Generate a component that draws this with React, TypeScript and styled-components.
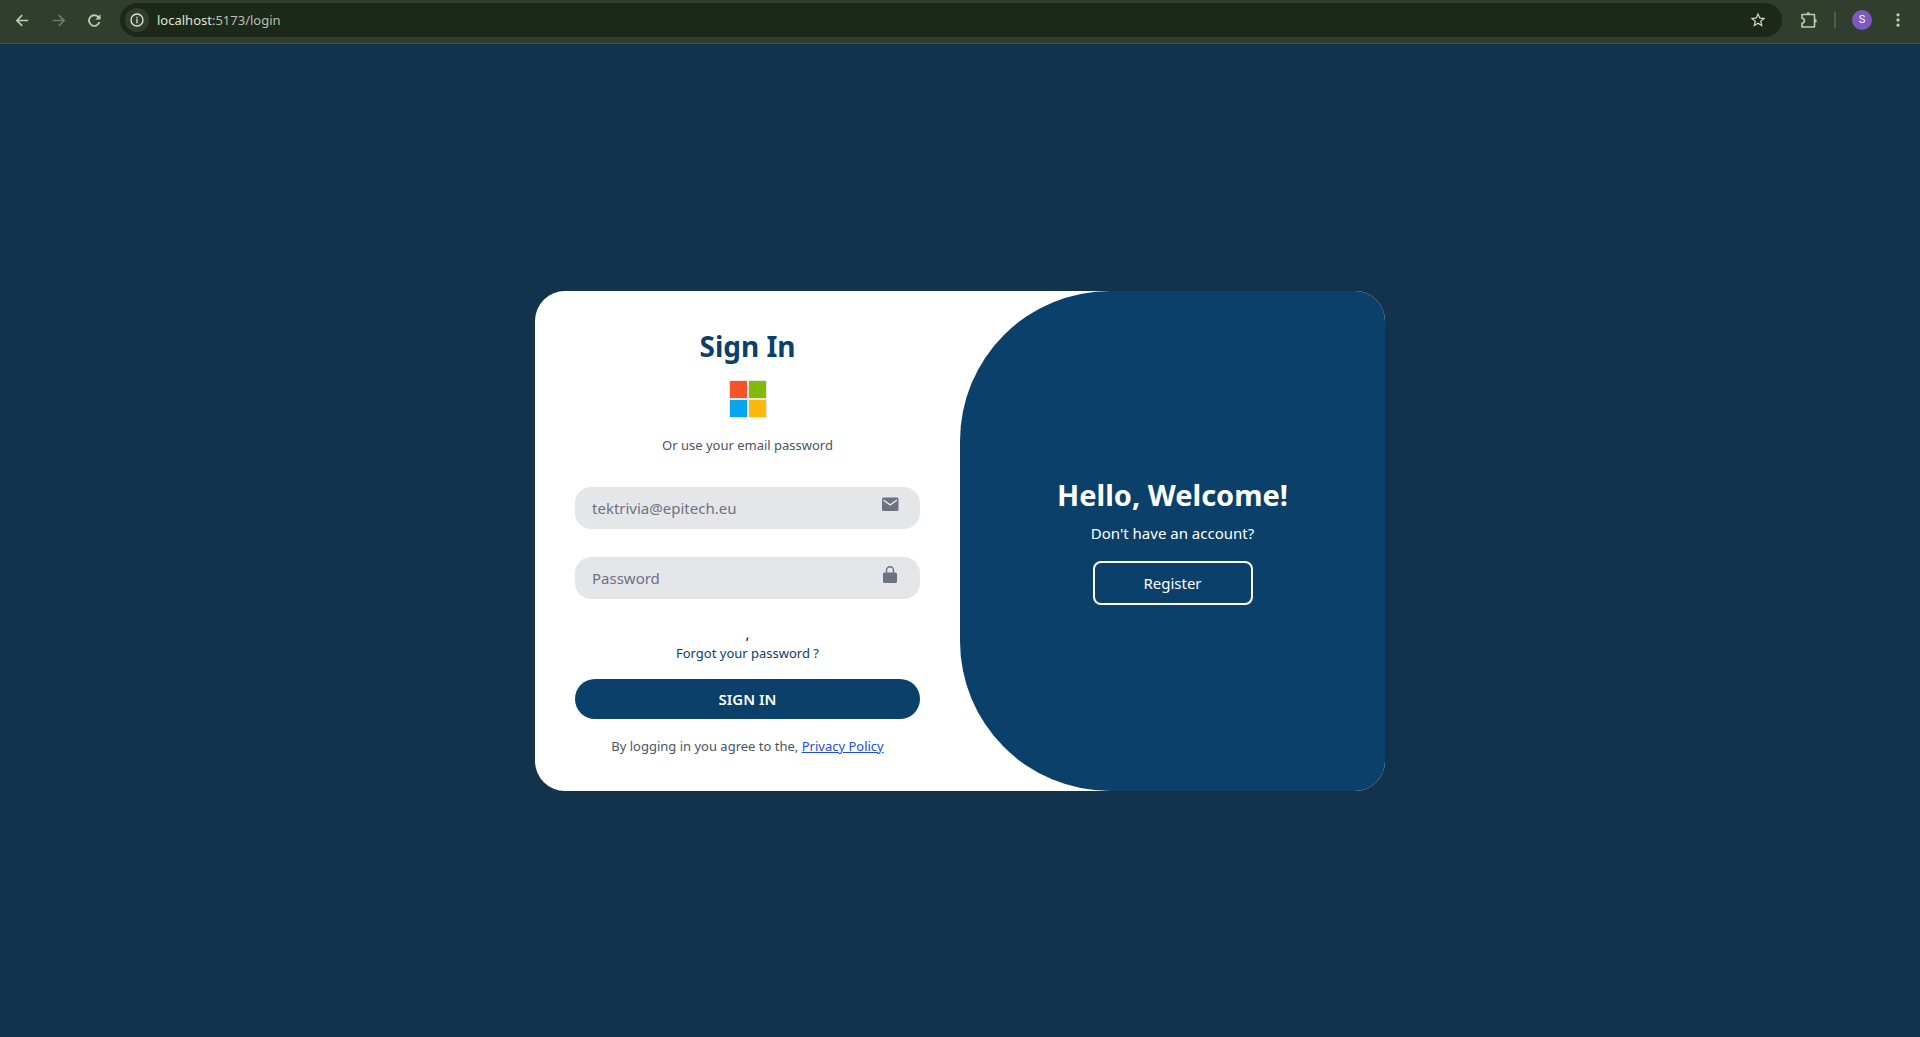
import React from "react";
import styled, { createGlobalStyle } from "styled-components";

const GlobalStyle = createGlobalStyle`
  *, *::before, *::after { box-sizing: border-box; }
  body { margin: 0; background: #13334c; }
  body, button, input { font-family: "Noto Sans", "Open Sans", sans-serif; }
`;

const Window = styled.div`
  min-height: 100vh;
  display: flex;
  flex-direction: column;
`;

const Toolbar = styled.header`
  height: 44px;
  padding: 0 9px 3px 9px;
  display: flex;
  align-items: center;
  background: #313e2d;
  border-bottom: 1px solid #46523f;
`;

const ToolButton = styled.button<{ $muted?: boolean }>`
  width: 26px;
  height: 26px;
  padding: 0;
  border: 0;
  background: none;
  display: grid;
  place-items: center;
  color: ${(p) => (p.$muted ? "#6f7c69" : "#b9ceb0")};
`;

const Navigation = styled.nav`
  display: flex;
  gap: 10px;
  margin-right: 13px;
`;

const AddressBar = styled.div`
  flex: 1;
  height: 34px;
  padding: 0 11px 0 5px;
  display: flex;
  align-items: center;
  gap: 8px;
  border-radius: 17px;
  background: #1c2919;
`;

const SiteInfo = styled.button`
  width: 24px;
  height: 24px;
  padding: 0;
  border: 0;
  border-radius: 50%;
  display: grid;
  place-items: center;
  background: #313e2d;
  color: #dfe4da;
`;

const BookmarkButton = styled(ToolButton)`
  color: #d3dacd;
`;

const Url = styled.div`
  flex: 1;
  font-size: 13px;
  line-height: 20px;
  color: #b9bfb4;
  span { color: #dfe4da; }
`;

const Extras = styled.div`
  display: flex;
  align-items: center;
  margin-left: 14px;
`;

const Divider = styled.span`
  width: 2px;
  height: 16px;
  margin: 0 16px 0 12px;
  background: #4d5d48;
`;

const Avatar = styled.button`
  width: 20px;
  height: 20px;
  padding: 0;
  border: 0;
  border-radius: 50%;
  margin-right: 13px;
  background: #7e57c2;
  color: #fff;
  font-family: Roboto, sans-serif;
  font-size: 11px;
  line-height: 20px;
`;

const Page = styled.main`
  flex: 1;
  display: grid;
  place-items: center;
`;

const Card = styled.section`
  width: 100%;
  max-width: 850px;
  min-height: 500px;
  display: grid;
  grid-template-columns: 1fr 1fr;
  overflow: hidden;
  border-radius: 30px;
  background: #fff;
`;

const Form = styled.form`
  padding: 37px 40px 30px;
  display: flex;
  flex-direction: column;
  align-items: center;
  text-align: center;
`;

const Title = styled.h1`
  margin: 0;
  font-size: 29px;
  line-height: 36px;
  font-weight: 700;
  color: inherit;
`;

const FormTitle = styled(Title)`
  font-size: 28px;
  color: #0a4069;
`;

const MicrosoftButton = styled.button`
  margin: 16px 0;
  padding: 0;
  border: 0;
  background: none;
  display: block;
  height: 38px;
`;

const Small = styled.p`
  margin: 0;
  font-size: 13px;
  line-height: 22px;
  color: #4b5563;
`;

const Fields = styled.div`
  width: 100%;
  margin: 31px 0 24px;
  display: grid;
  gap: 28px;
`;

const Field = styled.label`
  display: flex;
  height: 42px;
  padding: 0 20px 0 17px;
  border-radius: 16px;
  background: #e5e6ea;
  color: #6b7280;
  svg { margin-top: 7px; }
`;

const Input = styled.input`
  flex: 1;
  min-width: 0;
  padding: 0;
  border: 0;
  outline: 0;
  background: none;
  font-size: 15px;
  &::placeholder { color: #6b7280; opacity: 1; }
`;

const Comma = styled.span`
  font-size: 15px;
  line-height: 20px;
  color: #111827;
`;

const ForgotLink = styled.a`
  font-size: 13px;
  line-height: 20px;
  color: #0a4069;
  text-decoration: none;
`;

const SubmitButton = styled.button`
  width: 100%;
  height: 40px;
  margin: 16px 0;
  border: 0;
  border-radius: 20px;
  background: #0a4069;
  color: #fff;
  font-size: 15px;
  line-height: 24px;
  font-weight: 600;
`;

const PolicyLink = styled.a`
  color: #1d4ed8;
`;

const Welcome = styled.aside`
  display: flex;
  flex-direction: column;
  align-items: center;
  justify-content: center;
  border-radius: 150px 0 0 150px;
  background: #0a4069;
  color: #fff;
`;

const Question = styled.p`
  margin: 8px 0 16px;
  font-size: 15px;
  line-height: 24px;
`;

const RegisterButton = styled.button`
  width: 160px;
  height: 44px;
  border: 2px solid #fff;
  border-radius: 8px;
  background: none;
  color: #fff;
  font-size: 15px;
`;

const Icon = ({ d, size = 17 }: { d: string; size?: number }) => (
  <svg width={size} height={size} viewBox="0 0 24 24" fill="currentColor" aria-hidden="true">
    <path d={d} />
  </svg>
);

export default function App() {
  return (
    <Window>
      <GlobalStyle />
      <Toolbar>
        <Navigation>
          <ToolButton aria-label="Back">
            <Icon d="M20 10.800H6.800l5.600-5.600L10.800 3.600 2.400 12l8.400 8.400 1.600-1.600-5.600-5.600H20z" />
          </ToolButton>
          <ToolButton aria-label="Forward" $muted>
            <Icon d="M4 10.800h13.200l-5.600-5.600L13.200 3.600l8.400 8.400-8.400 8.400-1.600-1.600 5.600-5.600H4z" />
          </ToolButton>
          <ToolButton aria-label="Reload">
            <Icon d="M18.800 4.900A10 10 0 1 0 21.400 14.500H18.300A7 7 0 1 1 16.600 7.100L13.200 10.500H21.700V2z" size={15} />
          </ToolButton>
        </Navigation>
        <AddressBar>
          <SiteInfo aria-label="Site information">
            <Icon d="M11 10.500h2V17h-2zM11 7h2v2.200h-2zM12 2a10 10 0 1 0 0 20 10 10 0 0 0 0-20zm0 18a8 8 0 1 1 0-16 8 8 0 0 1 0 16z" size={16} />
          </SiteInfo>
          <Url><span>localhost</span>:5173/login</Url>
          <BookmarkButton aria-label="Bookmark">
            <Icon d="M22 9.240l-7.190-.62L12 2 9.190 8.630 2 9.240l5.460 4.730L5.820 21 12 17.270 18.180 21l-1.630-7.030zM12 15.400l-3.760 2.270 1-4.280-3.320-2.880 4.380-.38L12 6.100l1.710 4.040 4.380.38-3.320 2.880 1 4.280z" size={18} />
          </BookmarkButton>
        </AddressBar>
        <Extras>
          <ToolButton aria-label="Extensions">
            <svg width="18" height="18" viewBox="0 0 18 18" fill="none" stroke="currentColor" strokeWidth="1.6" strokeLinejoin="round" aria-hidden="true">
              <path d="M2 3.500H14.500V16H2v-3.700c3.200-.3 3.200-4.700 0-5z" />
              <path d="M6.300 3.500a1.900 2.300 0 0 1 3.800 0zM14.500 7.800a2.300 1.900 0 0 1 0 3.800z" fill="currentColor" stroke="none" />
            </svg>
          </ToolButton>
          <Divider />
          <Avatar aria-label="Profile">S</Avatar>
          <ToolButton aria-label="Menu">
            <Icon d="M12 3.800a2 2 0 1 0 0 4 2 2 0 0 0 0-4zm0 6.200a2 2 0 1 0 0 4 2 2 0 0 0 0-4zm0 6.200a2 2 0 1 0 0 4 2 2 0 0 0 0-4z" size={20} />
          </ToolButton>
        </Extras>
      </Toolbar>

      <Page>
        <Card>
          <Form onSubmit={(e) => e.preventDefault()}>
            <FormTitle>Sign In</FormTitle>
            <MicrosoftButton type="button" aria-label="Sign in with Microsoft">
              <svg width="39" height="38" viewBox="-1 0 39 38" aria-hidden="true">
                <path fill="#ebe7e2" d="M0 0h38v38H0z" />
                <path fill="#f65427" d="M1 1h17v17H1z" />
                <path fill="#80bb0a" d="M20 1h17v17H20z" />
                <path fill="#06a5f0" d="M1 20h17v17H1z" />
                <path fill="#feb80a" d="M20 20h17v17H20z" />
              </svg>
            </MicrosoftButton>
            <Small>Or use your email password</Small>
            <Fields>
              <Field>
                <Input type="email" aria-label="Email" placeholder="tektrivia@epitech.eu" />
                <svg width="20" height="20" viewBox="0 0 20 20" fill="currentColor" aria-hidden="true">
                  <path fillRule="evenodd" d="M3.500 3.500h13.500A1.500 1.500 0 0 1 18.500 5v10.500a1.500 1.500 0 0 1-1.500 1.500H3.500A1.500 1.500 0 0 1 2 15.500V5a1.500 1.500 0 0 1 1.500-1.500zM3.500 5.200v1.700L10.200 11.800l6.700-4.900V5.200L10.200 10z" />
                </svg>
              </Field>
              <Field>
                <Input type="password" aria-label="Password" placeholder="Password" />
                <svg width="20" height="20" viewBox="0 0 20 20" fill="currentColor" aria-hidden="true">
                  <path fillRule="evenodd" d="M4.500 8.500h1.300V6.300a4.200 4.200 0 0 1 8.400 0v2.200h1.300A1.500 1.500 0 0 1 17 10v7.500A1.500 1.500 0 0 1 15.500 19h-11A1.500 1.500 0 0 1 3 17.500V10a1.500 1.500 0 0 1 1.500-1.500zM7.200 8.500h5.600V6.300a2.800 2.800 0 0 0-5.600 0z" />
                </svg>
              </Field>
            </Fields>
            <Comma>,</Comma>
            <ForgotLink href="#forgot">Forgot your password ?</ForgotLink>
            <SubmitButton type="submit">SIGN IN</SubmitButton>
            <Small>
              By logging in you agree to the, <PolicyLink href="#privacy">Privacy Policy</PolicyLink>
            </Small>
          </Form>
          <Welcome>
            <Title as="h2">Hello, Welcome!</Title>
            <Question>Don't have an account?</Question>
            <RegisterButton type="button">Register</RegisterButton>
          </Welcome>
        </Card>
      </Page>
    </Window>
  );
}
